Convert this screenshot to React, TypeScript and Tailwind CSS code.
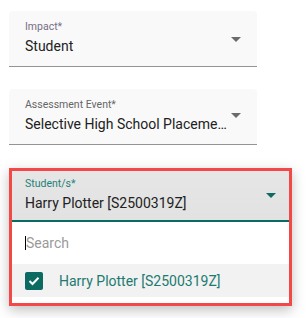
import React from "react";

function Caret({ color, className }: { color: string; className: string }) {
  return (
    <svg width="10" height="5" viewBox="0 0 10 5" className={`absolute ${className}`}>
      <path d="M0 0 L10 0 L5 5 Z" fill={color} />
    </svg>
  );
}

function SelectField({
  label,
  value,
  labelColor,
  arrowTop,
}: {
  label: string;
  value: string;
  labelColor: string;
  arrowTop: string;
}) {
  return (
    <div className="relative h-[56px] w-[248px] rounded-t bg-[#f9f9f9] border-b border-[#949494] pl-4 pr-[28px] pt-[9px]">
      <div className={`text-[10.5px] leading-[14px] ${labelColor}`}>{label}</div>
      <div className="mt-[2px] truncate text-[14px] leading-[20px] text-[#212121]">{value}</div>
      <Caret color="#6b6b6b" className={`right-4 ${arrowTop}`} />
    </div>
  );
}

export default function App() {
  return (
    <div className="min-h-screen bg-white pl-[9px] pt-[11px] font-['Roboto',sans-serif]">
      <div className="flex flex-col">
        <SelectField label="Impact*" value="Student" labelColor="text-[#776d84]" arrowTop="top-[26px]" />
        <div className="h-[22px]" />
        <SelectField
          label="Assessment Event*"
          value="Selective High School Placement Test 2025"
          labelColor="text-[#666666]"
          arrowTop="top-[24px]"
        />
        <div className="h-[23px]" />

        <div className="w-[283px] border-[3px] border-[#f24848] bg-white shadow-[0_4px_12px_rgba(0,0,0,0.25)]">
          <div className="relative h-[51px] bg-gradient-to-b from-[#e6e6e6] to-[#e2e2e2] border-b-2 border-[#0b6a61] pl-[13px] pt-[6px]">
            <div className="text-[10.5px] leading-[14px] text-[#1f8077]">Student/s*</div>
            <div className="mt-[2px] text-[14px] leading-[20px] text-[#212121]">Harry Plotter [S2500319Z]</div>
            <Caret color="#0e6b62" className="right-[13px] top-[22px]" />
          </div>

          <div className="flex h-[42px] items-center pl-[13px]">
            <span className="h-[14px] w-px bg-black" />
            <span className="text-[14px] leading-[20px] text-[#9a9a9a]">Search</span>
          </div>

          <div className="flex h-[33px] items-center bg-[#f2f2f2] pl-[13px]">
            <span className="flex h-[18px] w-[18px] items-center justify-center rounded-[2px] bg-[#0b6b63]">
              <svg width="12" height="10" viewBox="0 0 12 10">
                <path d="M1.5 5 L4.5 8 L10.5 1.8" fill="none" stroke="white" strokeWidth="2" />
              </svg>
            </span>
            <span className="ml-4 text-[14px] leading-[20px] text-[#1d7a71]">Harry Plotter [S2500319Z]</span>
          </div>

          <div className="h-[6px]" />
        </div>
      </div>
    </div>
  );
}
